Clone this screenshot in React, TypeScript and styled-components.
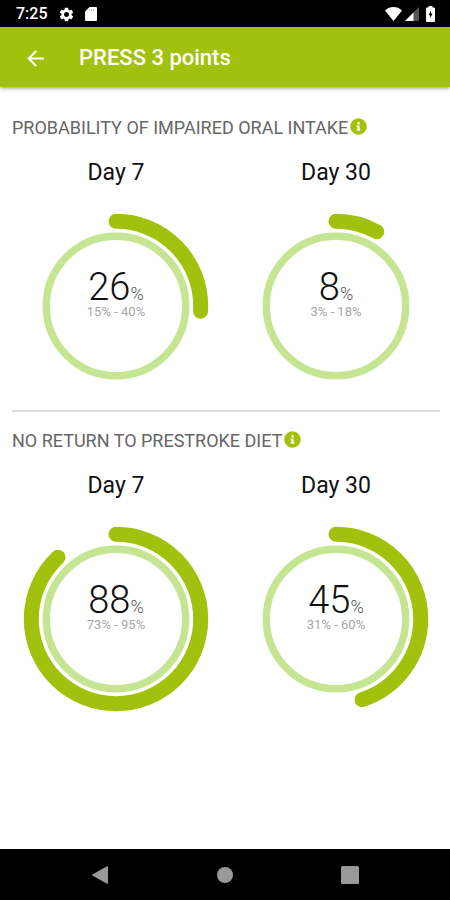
import React from "react";
import styled, { createGlobalStyle } from "styled-components";
import { MdArrowBack, MdSettings } from "react-icons/md";
import { FaInfoCircle } from "react-icons/fa";

const LIME = "#a2c10c";
const PALE = "#c5e593";

const GlobalStyle = createGlobalStyle`
  *, *::before, *::after { box-sizing: border-box; }
  body {
    margin: 0;
    background: #fff;
    font-family: Roboto, "Liberation Sans", sans-serif;
  }
`;

const Screen = styled.div`
  min-height: 100vh;
  display: flex;
  flex-direction: column;
  background: #fff;
`;

const StatusBar = styled.div`
  height: 27px;
  padding: 1px 15px 0 16px;
  display: flex;
  align-items: center;
  justify-content: space-between;
  background: #000;
  color: #fff;
`;

const StatusGroup = styled.div<{ $gap: number }>`
  display: flex;
  align-items: center;
  gap: ${({ $gap }) => $gap}px;
  svg { display: block; }
`;

const Clock = styled.span`
  font-size: 16px;
  line-height: 20px;
  font-weight: 500;
`;

const AppBar = styled.header`
  height: 60px;
  padding: 2px 19px 0;
  display: flex;
  align-items: center;
  gap: 28px;
  background: ${LIME};
  color: #fff;
  box-shadow: 0 1px 4px rgba(0, 0, 0, 0.45);
`;

const IconButton = styled.button`
  padding: 0;
  border: 0;
  background: none;
  color: inherit;
  display: flex;
  align-items: center;
  justify-content: center;
  cursor: pointer;
`;

const BackButton = styled(IconButton)`
  width: 32px;
  height: 32px;
`;

const Title = styled.h1`
  margin: 0;
  font-size: 22px;
  line-height: 28px;
  font-weight: 500;
`;

const Main = styled.main`
  flex: 1;
  padding-top: 12px;
`;

const Section = styled.section`
  padding: 18px 4px 11px 6px;
`;

const SectionHeader = styled.div`
  display: flex;
  align-items: center;
  gap: 2px;
  padding-left: 6px;
`;

const SectionTitle = styled.h2`
  margin: 0;
  color: #666;
  font-size: 18px;
  line-height: 22px;
  font-weight: 400;
`;

const InfoButton = styled(IconButton)`
  width: 17px;
  height: 17px;
  color: ${LIME};
  margin-bottom: 3px;
`;

const Divider = styled.hr`
  height: 2px;
  margin: 0 10px 0 12px;
  border: 0;
  background: #ddd;
`;

const Columns = styled.div`
  display: grid;
  grid-template-columns: 1fr 1fr;
`;

const Gauge = styled.figure`
  margin: 0;
  padding-top: 20px;
  display: flex;
  flex-direction: column;
  align-items: center;
  gap: 26px;
`;

const Day = styled.figcaption`
  color: #111;
  font-size: 23px;
  line-height: 28px;
`;

const Dial = styled.div`
  display: grid;
  place-items: center;
  > * { grid-area: 1 / 1; }
`;

const Ring = styled.svg`
  display: block;
  width: 186px;
  height: 186px;
`;

const ReadingText = styled.div`
  padding-bottom: 22px;
  text-align: center;
`;

const Value = styled.div`
  color: #111;
  font-size: 38px;
  line-height: 34px;
  font-weight: 300;
`;

const Percent = styled.span`
  color: #555;
  font-size: 18px;
  line-height: 18px;
`;

const Range = styled.div`
  color: #a6a6a6;
  font-size: 13px;
  line-height: 16px;
`;

const NavBar = styled.nav`
  height: 51px;
  padding: 0 37px;
  display: grid;
  grid-template-columns: repeat(3, 1fr);
  background: #000;
  color: #999;
`;

type Reading = { day: number; value: number; low: number; high: number };

const sections: { title: string; readings: Reading[] }[] = [
  {
    title: "PROBABILITY OF IMPAIRED ORAL INTAKE",
    readings: [
      { day: 7, value: 26, low: 15, high: 40 },
      { day: 30, value: 8, low: 3, high: 18 },
    ],
  },
  {
    title: "NO RETURN TO PRESTROKE DIET",
    readings: [
      { day: 7, value: 88, low: 73, high: 95 },
      { day: 30, value: 45, low: 31, high: 60 },
    ],
  },
];

function RiskGauge({ day, value, low, high }: Reading) {
  return (
    <Gauge>
      <Day>Day {day}</Day>
      <Dial>
        <Ring viewBox="0 0 186 186" fill="none" aria-hidden="true">
          <circle cx="93" cy="93" r="69.7" stroke={PALE} strokeWidth="7.4" />
          <circle
            cx="93"
            cy="93"
            r="84.7"
            stroke={LIME}
            strokeWidth="15"
            strokeLinecap="round"
            pathLength={100}
            strokeDasharray={`${value} 100`}
            transform="rotate(-90 93 93)"
          />
        </Ring>
        <ReadingText>
          <Value>
            {value}
            <Percent>%</Percent>
          </Value>
          <Range>
            {low}% - {high}%
          </Range>
        </ReadingText>
      </Dial>
    </Gauge>
  );
}

export default function App() {
  return (
    <Screen>
      <GlobalStyle />
      <StatusBar>
        <StatusGroup $gap={10}>
          <Clock>7:25</Clock>
          <MdSettings size={17} />
          <svg width="12" height="14" viewBox="0 0 12 14" fill="currentColor">
            <path d="M4.5 0H11a1 1 0 0 1 1 1v12a1 1 0 0 1-1 1H1a1 1 0 0 1-1-1V4.5z" />
            <path d="M4.2 2.4v1.800M6.4 2v2.200M8.6 2v2.200" stroke="#aaa" strokeWidth=".8" />
          </svg>
        </StatusGroup>
        <StatusGroup $gap={3}>
          <svg width="17" height="14" viewBox="0 0 18 14" preserveAspectRatio="none" fill="currentColor">
            <path d="M0 3.5C5-1.1 13-1.1 18 3.5L9 14z" />
          </svg>
          <svg width="14" height="14" viewBox="0 0 14 14">
            <path d="M14 0v14H0z" fill="#555" />
            <path d="M8.5 5.5V14H0z" fill="#fff" />
          </svg>
          <svg width="13" height="16" viewBox="3 0 13 16">
            <path d="M9.500 0h4v1.500H15a1 1 0 0 1 1 1V15a1 1 0 0 1-1 1H8a1 1 0 0 1-1-1V2.500a1 1 0 0 1 1-1h1.500z" fill="#fff" />
            <path d="M12 4L9.700 9.300h1.500V12.500l2.300-5.100h-1.500z" fill="#000" />
          </svg>
        </StatusGroup>
      </StatusBar>
      <AppBar>
        <BackButton type="button" aria-label="Back">
          <MdArrowBack size={25} />
        </BackButton>
        <Title>PRESS 3 points</Title>
      </AppBar>
      <Main>
        {sections.map((section, index) => (
          <React.Fragment key={section.title}>
            {index > 0 && <Divider />}
            <Section>
              <SectionHeader>
                <SectionTitle>{section.title}</SectionTitle>
                <InfoButton type="button" aria-label={`About ${section.title.toLowerCase()}`}>
                  <FaInfoCircle size={17} />
                </InfoButton>
              </SectionHeader>
              <Columns>
                {section.readings.map((reading) => (
                  <RiskGauge key={reading.day} {...reading} />
                ))}
              </Columns>
            </Section>
          </React.Fragment>
        ))}
      </Main>
      <NavBar>
        <IconButton type="button" aria-label="Back">
          <svg width="16" height="18" viewBox="0 0 16 18" fill="currentColor">
            <path d="M16 .8v16.400a.6.6 0 0 1-1 .5L.4 9.500a.6.6 0 0 1 0-1L15 .3a.6.6 0 0 1 1 .5z" />
          </svg>
        </IconButton>
        <IconButton type="button" aria-label="Home">
          <svg width="16" height="16" viewBox="0 0 16 16" fill="currentColor">
            <circle cx="8" cy="8" r="8" />
          </svg>
        </IconButton>
        <IconButton type="button" aria-label="Recent apps">
          <svg width="18" height="18" viewBox="0 0 18 18" fill="currentColor">
            <rect width="18" height="18" rx="1.500" />
          </svg>
        </IconButton>
      </NavBar>
    </Screen>
  );
}
